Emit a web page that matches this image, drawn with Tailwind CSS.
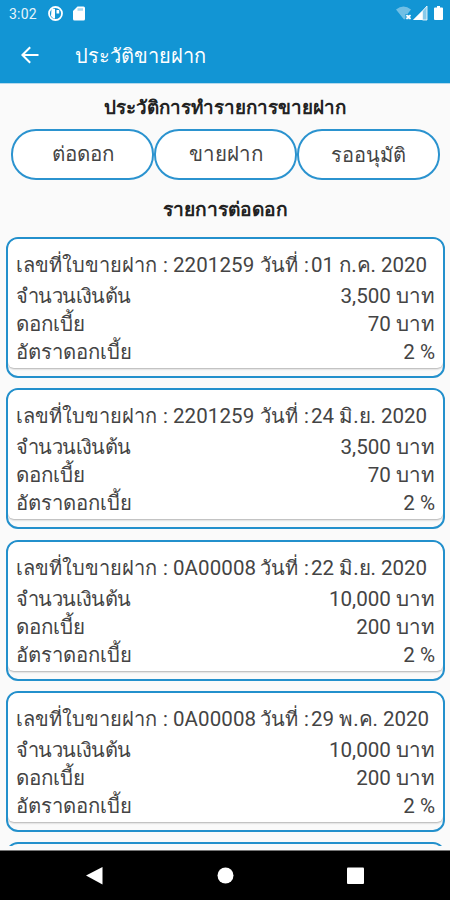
<!DOCTYPE html>
<html lang="th">
<head>
    <meta charset="UTF-8">
    <meta name="viewport" content="width=device-width, initial-scale=1.0">
    <title>ประวัติขายฝาก</title>
    <script src="https://cdn.jsdelivr.net/npm/@tailwindcss/browser@4"></script>
</head>
<body class="bg-[#fafafa]">
    <div class="flex flex-col h-[900px] w-[450px] overflow-hidden font-['Roboto','DejaVu_Sans',serif] text-[#444]">
        <!-- Status bar -->
        <header class="shrink-0 h-[84px] bg-[#1295d4] border-b border-[#b5d9ec] text-white">
            <div class="flex items-center h-[27px] pl-[9px] pr-[7px]">
                <span class="text-[14px] leading-none tracking-[0.2px] opacity-90">3:02</span>
                <svg class="ml-[11px]" width="15" height="15" viewBox="0 0 15 15">
                    <circle cx="7.500" cy="7.500" r="6.500" fill="none" stroke="#fff" stroke-width="1.800"/>
                    <path d="M3.500 3h3.500v9.500H5.500L3 10zM8.500 4h2.700v3.500H8.500z" fill="#fff"/>
                </svg>
                <svg class="ml-[10px]" width="12" height="15" viewBox="0 0 12 15">
                    <path d="M4.500.5H10.500Q12 .5 12 2v11q0 1.500-1.500 1.500h-9Q0 14.500 0 13V5z" fill="#fff"/>
                    <path d="M4.500 3.500h5.500" stroke="#1295d4" stroke-width="2.500" opacity=".35"/>
                </svg>
                <div class="flex items-center ml-auto">
                    <svg width="16" height="15" viewBox="0 0 16 15">
                        <path d="M0 3.500Q7.500-2.500 15 3.500L11.500 8H9.500v5L8 13.500z" fill="#fff" opacity=".4"/>
                        <path d="M10.300 9h4.200v4.200h-4.200z" fill="#fff" opacity=".5"/>
                        <path d="M10.500 9l4 4M14.500 9l-4 4" stroke="#fff" stroke-width="1.500"/>
                    </svg>
                    <svg class="ml-px" width="15" height="15" viewBox="0 0 15 15">
                        <path d="M0 14L14 0v14z" fill="#fff" opacity=".5"/>
                        <path d="M0 14L9 5v9z" fill="#fff"/>
                        <path d="M14 0v14H9.500V5z" fill="none" stroke="#fff" stroke-width=".8"/>
                    </svg>
                    <svg class="ml-[6px]" width="9" height="15" viewBox="0 0 9 15">
                        <path d="M3 0h3v1.500h2q1 0 1 1V13q0 1-1 1H1q-1 0-1-1V2.500q0-1 1-1h2z" fill="#fff"/>
                    </svg>
                </div>
            </div>
            <div class="flex items-center h-[56px] pl-[21px]">
                <svg width="18" height="18" viewBox="0 0 18 18" fill="none" stroke="#fff" stroke-width="2">
                    <path d="M17.500 9H2M9.200 1.200L1.400 9l7.800 7.800"/>
                </svg>
                <h1 class="ml-[36px] pt-px text-[20px] leading-none">ประวัติขายฝาก</h1>
            </div>
        </header>

        <main class="h-[762px] overflow-hidden">
            <h2 class="h-[45px] pt-[9px] text-center text-[18.8px] leading-[30px] font-bold text-[#222]">ประวัติการทำรายการขายฝาก</h2>
            <div class="grid grid-cols-3 h-[51px] pl-[11px] pr-[10px] text-[20.5px]">
                <button class="border-2 border-[#2b93cf] rounded-[25px] bg-white">ต่อดอก</button>
                <button class="border-2 border-[#2b93cf] rounded-[25px] bg-white">ขายฝาก</button>
                <button class="border-2 border-[#2b93cf] rounded-[25px] bg-white text-[20px]">รออนุมัติ</button>
            </div>
            <h2 class="h-[57px] pt-[15px] text-center text-[19.2px] leading-[30px] font-bold text-[#222]">รายการต่อดอก</h2>
            <div id="list" class="flex flex-col gap-[10.3px] pl-[6px] pr-[5px]"></div>
        </main>

        <!-- Navigation bar -->
        <nav class="shrink-0 mt-auto h-[50px] bg-black border-t border-[#777]">
            <svg width="450" height="49" viewBox="0 0 450 49" fill="#fff">
                <path d="M86 24.500L102.500 16v17.500z"/>
                <circle cx="225.500" cy="24.500" r="8"/>
                <rect x="347" y="16.500" width="17" height="16.500" rx="1"/>
            </svg>
        </nav>
    </div>

    <template id="card">
        <div class="shrink-0 h-[141px] border-2 border-[#2390cc] rounded-[12px] bg-[#fafafa] overflow-hidden">
            <div class="h-[129px] pt-[12px] pl-[8px] pr-[8px] rounded-[6px] bg-white shadow-[0_1px_2px_rgba(0,0,0,0.3)] text-[20px] leading-[28px] whitespace-nowrap">
                <div class="flex h-[31px]">
                    <span class="w-[147px]">เลขที่ใบขายฝาก</span>
                    <span class="w-[10px]">:</span>
                    <span class="w-[87px] text-[20.5px] tracking-[0.1px]" data-key="no"></span>
                    <span class="w-[44px]">วันที่</span>
                    <span class="w-[7px]">:</span>
                    <span class="text-[20.5px]" data-key="date"></span>
                </div>
                <div class="flex justify-between"><span class="tracking-[-0.6px]">จำนวนเงินต้น</span><span class="text-[20.6px]" data-key="amount"></span></div>
                <div class="flex justify-between"><span class="text-[20.6px]">ดอกเบี้ย</span><span class="text-[20.6px]" data-key="interest"></span></div>
                <div class="flex justify-between"><span class="text-[20.3px]">อัตราดอกเบี้ย</span><span class="text-[20.6px]">2 %</span></div>
            </div>
        </div>
    </template>

    <script>
        const items = [
            { no: '2201259', date: '01 ก.ค. 2020', amount: '3,500 บาท', interest: '70 บาท' },
            { no: '2201259', date: '24 มิ.ย. 2020', amount: '3,500 บาท', interest: '70 บาท' },
            { no: '0A00008', date: '22 มิ.ย. 2020', amount: '10,000 บาท', interest: '200 บาท' },
            { no: '0A00008', date: '29 พ.ค. 2020', amount: '10,000 บาท', interest: '200 บาท' }
        ];
        const list = document.getElementById('list');
        items.forEach(item => {
            const card = document.getElementById('card').content.cloneNode(true);
            card.querySelectorAll('[data-key]').forEach(el => {
                el.textContent = item[el.dataset.key];
            });
            list.appendChild(card);
        });

        // next card, only its top edge is in view
        const next = document.createElement('div');
        next.className = 'shrink-0 h-[141px] border-2 border-[#2390cc] rounded-[12px]';
        list.appendChild(next);
    </script>
</body>
</html>
